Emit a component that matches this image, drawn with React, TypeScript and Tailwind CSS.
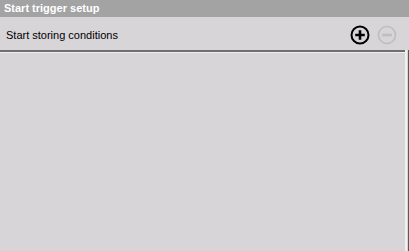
import { FC } from 'react';

const PlusIcon: FC = () => (
    <svg width="20" height="20" viewBox="0 0 20 20">
        <circle cx="10" cy="10" r="8.5" fill="none" stroke="#000" strokeWidth="2" />
        <path d="M10 5.2v9.6M5.2 10h9.6" stroke="#000" strokeWidth="2.6" />
    </svg>
);

const MinusIcon: FC = () => (
    <svg width="20" height="20" viewBox="0 0 20 20">
        <circle cx="10" cy="10" r="8.5" fill="none" stroke="#bebdbf" strokeWidth="1.6" />
        <path d="M5.2 10h9.6" stroke="#bebdbf" strokeWidth="2.6" />
    </svg>
);

export default function App() {
    return (
        <div className="w-[409px] h-[251px] flex flex-col bg-[#d7d5d8] overflow-hidden" style={{ fontFamily: '"Liberation Sans", Arial, sans-serif' }}>
            <div className="h-[17px] bg-[#a3a3a3] px-1 flex items-center text-[11px] font-bold text-white">
                Start trigger setup
            </div>
            <div className="h-[33px] flex items-center justify-between pt-[3px] pl-[6px] pr-[12px] text-[11px] text-black">
                <span>Start storing conditions</span>
                <div className="flex items-center gap-[7px]">
                    <PlusIcon />
                    <MinusIcon />
                </div>
            </div>
            <div className="flex-1 flex">
                <div className="flex-1 border-t-2 border-[#6e6e6e]">
                    <div className="h-px bg-[#eeeeee]" />
                </div>
                <div className="w-[2px] bg-[#f0f0f0]" />
                <div className="w-px" />
                <div className="w-px bg-[#5a5a5a]" />
            </div>
        </div>
    );
}
